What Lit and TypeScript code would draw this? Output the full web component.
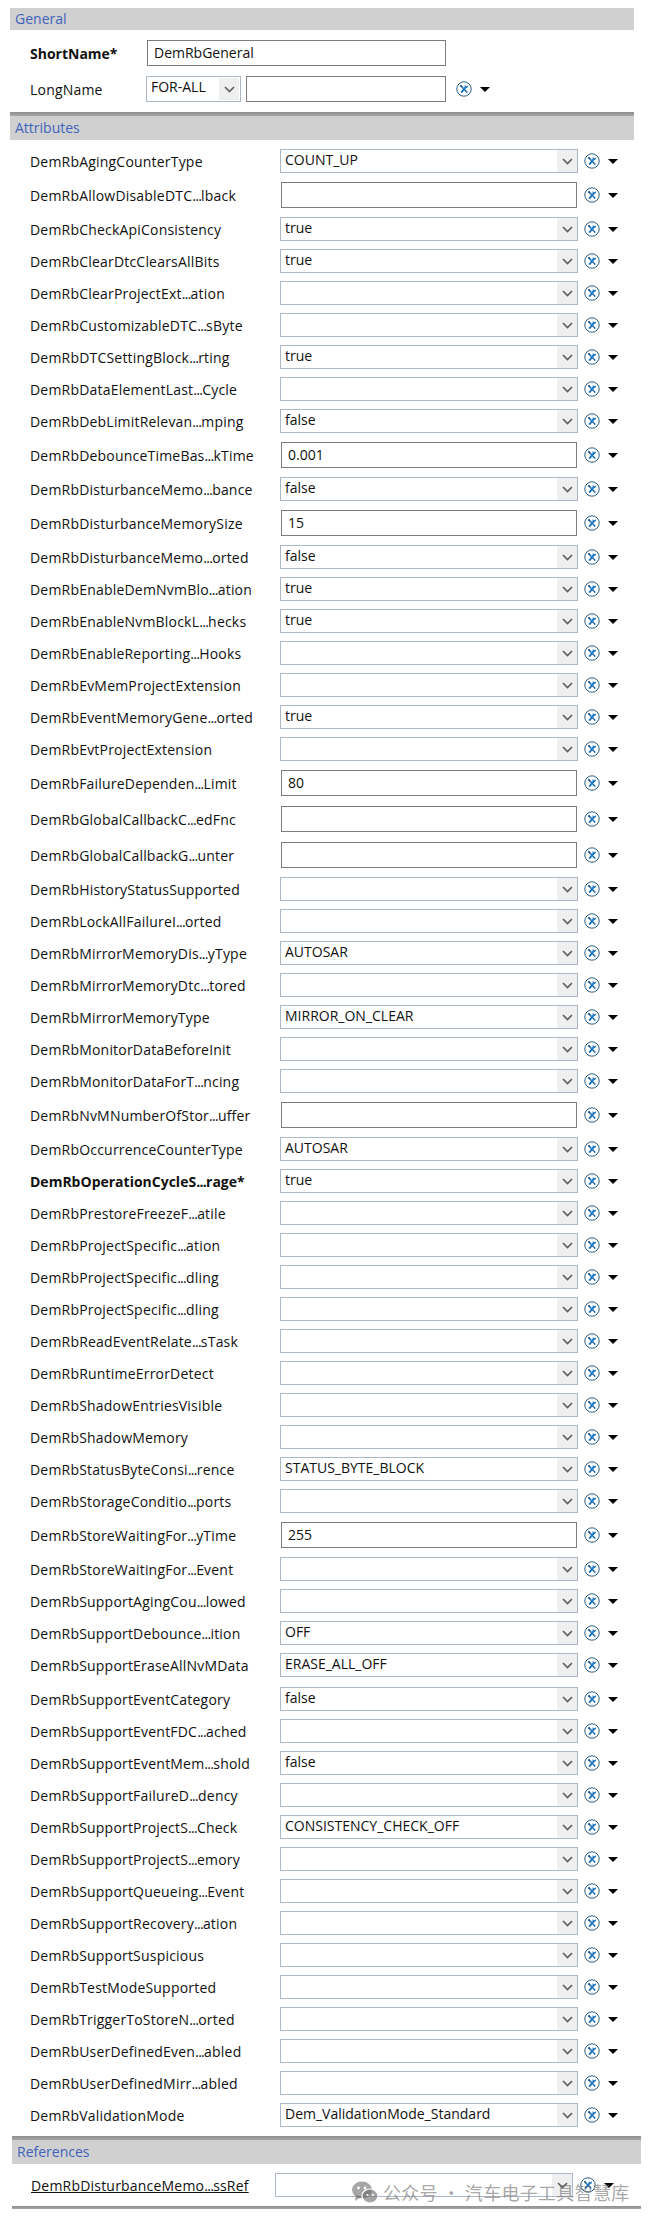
import { LitElement, html, css, svg } from "lit";
import { customElement } from "lit/decorators.js";

type Row = { l: string; v?: string; t?: boolean; b?: boolean; gap?: boolean };
const P = "DemRb";
const rows: Row[] = [
  { l: "AgingCounterType", v: "COUNT_UP" },
  { l: "AllowDisableDTC...lback", t: true },
  { l: "CheckApiConsistency", v: "true" },
  { l: "ClearDtcClearsAllBits", v: "true" },
  { l: "ClearProjectExt...ation" },
  { l: "CustomizableDTC...sByte" },
  { l: "DTCSettingBlock...rting", v: "true" },
  { l: "DataElementLast...Cycle" },
  { l: "DebLimitRelevan...mping", v: "false" },
  { l: "DebounceTimeBas...kTime", t: true, v: "0.001" },
  { l: "DisturbanceMemo...bance", v: "false" },
  { l: "DisturbanceMemorySize", t: true, v: "15" },
  { l: "DisturbanceMemo...orted", v: "false" },
  { l: "EnableDemNvmBlo...ation", v: "true" },
  { l: "EnableNvmBlockL...hecks", v: "true" },
  { l: "EnableReporting...Hooks" },
  { l: "EvMemProjectExtension" },
  { l: "EventMemoryGene...orted", v: "true" },
  { l: "EvtProjectExtension" },
  { l: "FailureDependen...Limit", t: true, v: "80" },
  { l: "GlobalCallbackC...edFnc", t: true },
  { l: "GlobalCallbackG...unter", t: true },
  { l: "HistoryStatusSupported" },
  { l: "LockAllFailureI...orted" },
  { l: "MirrorMemoryDis...yType", v: "AUTOSAR" },
  { l: "MirrorMemoryDtc...tored" },
  { l: "MirrorMemoryType", v: "MIRROR_ON_CLEAR" },
  { l: "MonitorDataBeforeInit" },
  { l: "MonitorDataForT...ncing" },
  { l: "NvMNumberOfStor...uffer", t: true },
  { l: "OccurrenceCounterType", v: "AUTOSAR" },
  { l: "OperationCycleS...rage*", v: "true", b: true },
  { l: "PrestoreFreezeF...atile" },
  { l: "ProjectSpecific...ation" },
  { l: "ProjectSpecific...dling" },
  { l: "ProjectSpecific...dling" },
  { l: "ReadEventRelate...sTask" },
  { l: "RuntimeErrorDetect" },
  { l: "ShadowEntriesVisible" },
  { l: "ShadowMemory" },
  { l: "StatusByteConsi...rence", v: "STATUS_BYTE_BLOCK" },
  { l: "StorageConditio...ports" },
  { l: "StoreWaitingFor...yTime", t: true, v: "255" },
  { l: "StoreWaitingFor...Event" },
  { l: "SupportAgingCou...lowed" },
  { l: "SupportDebounce...ition", v: "OFF" },
  { l: "SupportEraseAllNvMData", v: "ERASE_ALL_OFF" },
  { l: "SupportEventCategory", v: "false", gap: true },
  { l: "SupportEventFDC...ached" },
  { l: "SupportEventMem...shold", v: "false" },
  { l: "SupportFailureD...dency" },
  { l: "SupportProjectS...Check", v: "CONSISTENCY_CHECK_OFF" },
  { l: "SupportProjectS...emory" },
  { l: "SupportQueueing...Event" },
  { l: "SupportRecovery...ation" },
  { l: "SupportSuspicious" },
  { l: "TestModeSupported" },
  { l: "TriggerToStoreN...orted" },
  { l: "UserDefinedEven...abled" },
  { l: "UserDefinedMirr...abled" },
  { l: "ValidationMode", v: "Dem_ValidationMode_Standard" },
];

const label = (s: string) => {
  const [a, b] = s.split("...");
  return b === undefined ? s : html`${a}<span class="dots">...</span>${b}`;
};

const tool = html`<svg class="tool" width="16" height="16" viewBox="0 0 16 16">
  <circle cx="8" cy="8" r="7.2" fill="#fff" stroke="#2b5f86" stroke-width="1"></circle>
  ${svg`<path d="M5.2 11.6 10.2 5.6" stroke="#1b74bd" stroke-width="1.8" fill="none"></path>
  <path d="M8.8 3.9 10.1 5.4 11.7 4.2 11.9 6.2 10.2 7 8.6 5.8Z" fill="#1b74bd"></path>
  <path d="M4.6 4.4 11.2 11.4" stroke="#1b74bd" stroke-width="1.5" fill="none"></path>
  <path d="M4 4.9 5 3.8 6.4 5.4 5.4 6.4Z" fill="#0f4f86"></path>`}
</svg>`;

const chevron = html`<svg width="11" height="7" viewBox="0 0 11 7"><path d="M1 1 5.5 5.5 10 1" fill="none" stroke="#606060" stroke-width="1.7"></path></svg>`;

@customElement("app-root")
export class AppRoot extends LitElement {
  static styles = css`
    :host { display: block; width: 648px; height: 2219px; position: relative; background: #fff; overflow: hidden;
      font-family: "Open Sans", "Noto Sans", sans-serif; font-size: 14px; color: #111; }
    .top { padding-top: 8px; }
    .bar { margin-left: 10px; width: 624px; height: 22px; line-height: 22px; background: #d0d0d0; color: #3f63bd; padding-left: 5px; box-sizing: border-box; font-size: 14px; }
    .rule { margin-left: 10px; width: 624px; height: 4px; background: linear-gradient(#8f8f8f, #a6a6a6); }
    .bar.attr { height: 24px; line-height: 23px; }
    .wide { margin-left: 12px; width: 629px; }
    .general { height: 82px; padding: 10px 0 0 30px; box-sizing: border-box; }
    .gr { display: flex; align-items: center; }
    .gr + .gr { margin-top: 10px; }
    .in { box-sizing: border-box; height: 26px; border: 1px solid #7c7c7c; background: #fff; padding-left: 6px; line-height: 23px; white-space: nowrap; }
    .sn { width: 299px; margin-left: 1px; }
    .dd { box-sizing: border-box; height: 24px; border: 1px solid #adb8c6; background: #fff; display: flex; line-height: 20px; }
    .dd .val { flex: 1; padding-left: 4px; white-space: nowrap; overflow: hidden; }
    .dd .arr { width: 20px; background: #efefef; display: flex; align-items: center; justify-content: center; }
    .lang { width: 95px; height: 26px; }
    .lang .arr { margin: 1px; }
    .ln { width: 200px; margin-left: 5px; }
    .ctl { display: flex; align-items: center; }
    .tool { display: block; flex: none; }
    .tri { flex: none; width: 0; height: 0; border-left: 5px solid transparent; border-right: 5px solid transparent; border-top: 5px solid #000; margin-left: 8px; }
    .gen-tool { margin-left: 10px; }
    .list { display: flex; flex-direction: column; gap: 8px; padding: 9px 0 9px 30px; }
    .row { display: flex; align-items: center; height: 24px; }
    .row.text { height: 26px; margin: 1px 0; }
    .row.extra { margin-top: 2px; }
    .lab { width: 250px; white-space: nowrap; letter-spacing: 0.2px; }
    .lab.b { font-weight: 700; letter-spacing: 0; }
    .lab.gl { width: 116px; }
    .dots { letter-spacing: -0.7px; }
    .row .dd { width: 298px; }
    .row .in { width: 296px; margin-left: 1px; padding-left: 6px; }
    .row .ctlbox { margin-left: 6px; margin-right: 0; display: flex; align-items: center; }
    .row.text .ctlbox { margin-left: 7px; }
    .refs { padding: 9px 0 9px 31px; }
    .ref-row { display: flex; align-items: center; height: 24px; }
    .ref-lab { width: 244px; text-decoration: underline; white-space: nowrap; letter-spacing: 0.2px; }
    .ref-row .dd { width: 298px; }
    .ref-row .ctlbox { margin-left: 7px; display: flex; align-items: center; }
    .rule.wide { margin-left: 12px; }
    .rule.thin { height: 3px; }
    .wm { position: absolute; left: 352px; top: 2179px; display: flex; align-items: center; gap: 5px; color: rgba(110,110,110,.62);
      font-family: "Noto Sans CJK SC", sans-serif; font-size: 18px; letter-spacing: 0.3px; line-height: 27px; white-space: nowrap; }
  `;

  render() {
    return html`
      <div class="top">
        <div class="bar">General</div>
        <div class="general">
          <div class="gr"><div class="lab gl b">ShortName*</div><div class="in sn">DemRbGeneral</div></div>
          <div class="gr">
            <div class="lab gl">LongName</div>
            <div class="dd lang"><div class="val">FOR-ALL</div><div class="arr">${chevron}</div></div>
            <div class="in ln"></div>
            <div class="ctl gen-tool">${tool}<div class="tri"></div></div>
          </div>
        </div>
        <div class="rule"></div>
        <div class="bar attr">Attributes</div>
        <div class="list">
          ${rows.map((r) => html`<div class="row ${r.t ? "text" : ""} ${r.gap ? "extra" : ""}">
            <div class="lab ${r.b ? "b" : ""}">${P}${label(r.l)}</div>
            ${r.t
              ? html`<div class="in">${r.v ?? ""}</div>`
              : html`<div class="dd"><div class="val">${r.v ?? ""}</div><div class="arr">${chevron}</div></div>`}
            <div class="ctlbox">${tool}<div class="tri"></div></div>
          </div>`)}
        </div>
        <div class="rule wide"></div>
        <div class="bar attr wide">References</div>
        <div class="refs">
          <div class="ref-row">
            <div class="ref-lab">DemRbDisturbanceMemo<span class="dots">...</span>ssRef</div>
            <div class="dd"><div class="val"></div><div class="arr">${chevron}</div></div>
            <div class="ctlbox">${tool}<div class="tri"></div></div>
          </div>
        </div>
        <div class="rule wide thin"></div>
      </div>
      <div class="wm">
        <svg width="26" height="24" viewBox="0 0 26 24" fill="currentColor">
          <ellipse cx="10" cy="9" rx="10" ry="8.5"></ellipse>
          <path d="M4 14 3 20 9 16Z"></path>
          <ellipse cx="18" cy="15" rx="8" ry="7" stroke="#fff" stroke-width="1.2"></ellipse>
          <circle cx="6.5" cy="7" r="1.4" fill="#fff"></circle>
          <circle cx="13" cy="7" r="1.4" fill="#fff"></circle>
          <circle cx="15.5" cy="14" r="1.1" fill="#fff"></circle>
          <circle cx="21" cy="14" r="1.1" fill="#fff"></circle>
        </svg>
        <span>公众号 · 汽车电子工具智慧库</span>
      </div>
    `;
  }
}
